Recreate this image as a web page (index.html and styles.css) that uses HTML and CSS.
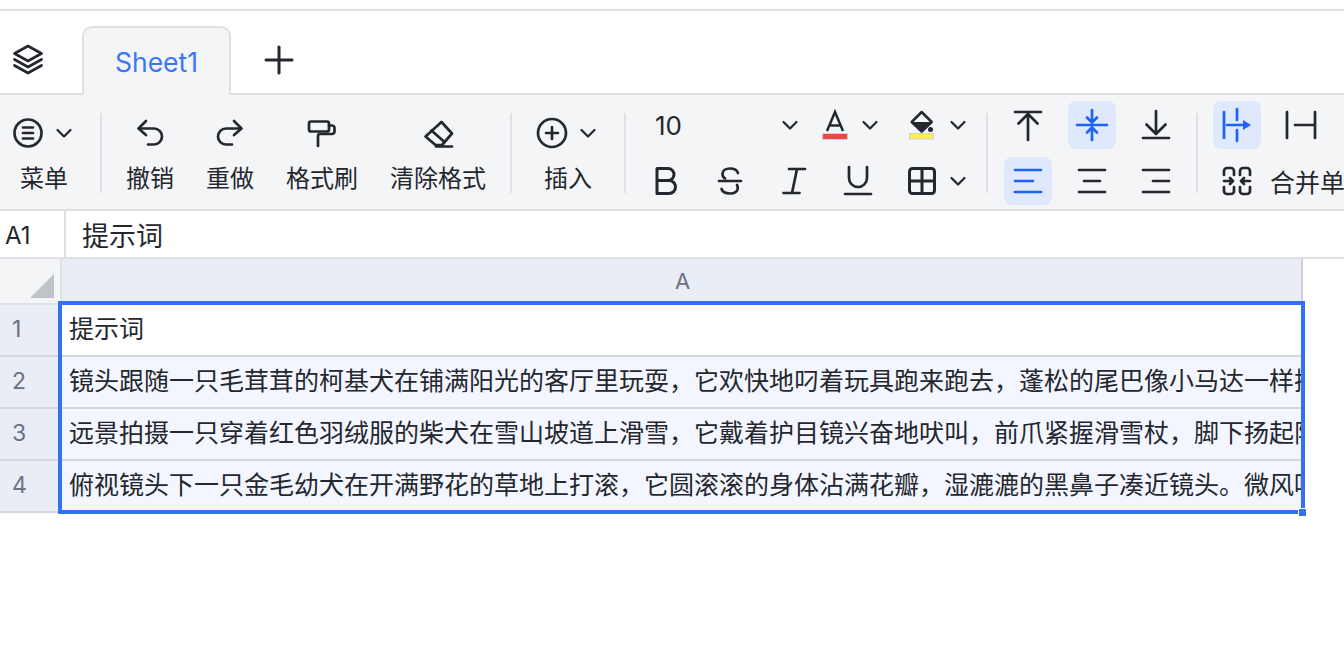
FILE: index.html

```html
<!DOCTYPE html>
<html lang="zh-CN">
<head>
  <meta charset="UTF-8" />
  <title>Sheet1</title>
  <link rel="stylesheet" href="styles.css">
</head>
<body>
  <svg class="defs" width="0" height="0">
    <symbol id="chev" viewBox="0 0 16 32"><path d="M1.5 13l6.500 6.500 6.500-6.500"/></symbol>
  </svg>

  <div class="tabbar">
    <div class="layers">
      <svg class="ic" width="32" height="32" viewBox="0 0 32 32"><path d="M16 2L29.500 9.500 16 17 2.500 9.500z"/><path d="M2.500 15.500l13.500 7.500 13.500-7.500"/><path d="M2.500 21.500l13.500 7.500 13.500-7.500"/></svg>
    </div>
    <div class="tab">Sheet1</div>
    <div class="add">
      <svg class="ic thick" width="32" height="32" viewBox="0 0 32 32"><path d="M16 3v26M3 16h26"/></svg>
    </div>
  </div>

  <div class="toolbar">
    <div class="tool first">
      <div class="tool-icon">
        <svg class="ic" width="32" height="32" viewBox="0 0 32 32"><circle cx="16" cy="16" r="13.500"/><path d="M11 10.500h10M11 16h10M11 21.500h10"/></svg>
        <svg class="ic thin chev" width="16" height="32"><use href="#chev"/></svg>
      </div>
      <span>菜单</span>
    </div>
    <div class="sep"></div>

    <div class="tools">
      <div class="tool">
        <div class="tool-icon">
          <svg class="ic" width="32" height="32" viewBox="0 0 32 32"><path d="M12 4L4.500 11.500 12 18"/><path d="M5 11.500h15a8 8 0 0 1 0 16h-6"/></svg>
        </div>
        <span>撤销</span>
      </div>
      <div class="tool">
        <div class="tool-icon">
          <svg class="ic" width="32" height="32" viewBox="0 0 32 32"><path d="M20 4l7.500 7.500L20 18"/><path d="M27 11.500H12a8 8 0 0 0 0 16h6"/></svg>
        </div>
        <span>重做</span>
      </div>
      <div class="tool">
        <div class="tool-icon">
          <svg class="ic" width="32" height="32" viewBox="0 0 32 32"><rect x="3" y="4.500" width="20" height="10" rx="2"/><path d="M23 8.500h3a2.500 2.500 0 0 1 2.500 2.500v3.500a2.500 2.500 0 0 1-2.500 2.500H14a2 2 0 0 0-2 2v10"/></svg>
        </div>
        <span>格式刷</span>
      </div>
      <div class="tool">
        <div class="tool-icon">
          <svg class="ic" width="32" height="32" viewBox="0 0 32 32"><path d="M19.500 5L30 16.500 20 28h-6.500L3.500 19.500z"/><path d="M9.500 13.500L22.500 25"/><path d="M14 29.500h16"/></svg>
        </div>
        <span>清除格式</span>
      </div>
    </div>
    <div class="sep"></div>

    <div class="tool insert">
      <div class="tool-icon">
        <svg class="ic" width="32" height="32" viewBox="0 0 32 32"><circle cx="16" cy="16" r="14"/><path d="M16 10v12M10 16h12"/></svg>
        <svg class="ic thin chev" width="16" height="32"><use href="#chev"/></svg>
      </div>
      <span>插入</span>
    </div>
    <div class="sep"></div>

    <div class="font-group">
      <div class="btn-row">
        <div class="font-size"><span>10</span><svg class="ic thin" width="16" height="32"><use href="#chev"/></svg></div>
        <div class="btn-split color-a">
          <svg width="32" height="32" viewBox="0 0 32 32"><path class="ic-line" d="M8 22L16 3l8 19M10.500 16.500h11"/><rect x="3.500" y="24.500" width="25" height="6" fill="#ef4444" stroke="#d2d3d6"/></svg>
          <svg class="ic thin" width="16" height="32"><use href="#chev"/></svg>
        </div>
        <div class="btn-split color-b">
          <svg width="32" height="32" viewBox="0 0 32 32"><path d="M16.700 3l10 10-10 9.500-10-9.500z" fill="none" stroke="#24272e" stroke-width="2.500" stroke-linejoin="round"/><path d="M6.700 13h20l-10 9.500z" fill="#24272e"/><circle cx="25.500" cy="20.500" r="2.500" fill="#24272e"/><rect x="4.500" y="24.500" width="24" height="5.500" fill="#fdeb4f" stroke="#d2d3d6"/></svg>
          <svg class="ic thin" width="16" height="32"><use href="#chev"/></svg>
        </div>
      </div>
      <div class="btn-row">
        <div class="btn">
          <svg class="ic thick" width="32" height="32" viewBox="0 0 32 32"><path d="M7 15.500h11a6 6 0 0 0 0-12H7v25h12a6.500 6.500 0 0 0 0-13"/></svg>
        </div>
        <div class="btn">
          <svg class="ic" width="32" height="32" viewBox="0 0 32 32"><path d="M5 16h22"/><path d="M24 8c-1-3-4-4.500-8-4.500S8.500 5.500 8.500 9c0 2 1 3.500 2.500 4.500"/><path d="M23 20c.5 1 .8 2 .8 3 0 3.500-3.300 5.500-7.800 5.500S8.500 27 7.500 24"/></svg>
        </div>
        <div class="btn">
          <svg class="ic" width="32" height="32" viewBox="0 0 32 32"><path d="M11 4h16M5.500 28h16M19 4l-5 24"/></svg>
        </div>
        <div class="btn">
          <svg class="ic" width="32" height="32" viewBox="0 0 32 32"><path d="M7 2v11a9 9 0 0 0 18 0V2"/><path d="M3 29h26"/></svg>
        </div>
        <div class="btn-split borders">
          <svg class="ic thick" width="32" height="32" viewBox="0 0 32 32"><rect x="3.500" y="3.500" width="25" height="25" rx="3"/><path d="M16 3.500v25M3.500 16h25"/></svg>
          <svg class="ic thin" width="16" height="32"><use href="#chev"/></svg>
        </div>
      </div>
    </div>
    <div class="sep"></div>

    <div class="align-group">
      <div class="btn-row">
        <div class="btn sq"><svg class="ic" width="32" height="32" viewBox="0 0 32 32"><path d="M3 3h26M16 31V5M6.500 14.500L16 5l9.500 9.500"/></svg></div>
        <div class="btn sq on"><svg class="ic" width="32" height="32" viewBox="0 0 32 32"><path d="M1 16h30M16 1v12M11 8.500l5 5 5-5M16 31V19M11 23.500l5-5 5 5"/></svg></div>
        <div class="btn sq"><svg class="ic" width="32" height="32" viewBox="0 0 32 32"><path d="M3 29h26M16 2v23M6.500 15.500L16 25l9.500-9.500"/></svg></div>
      </div>
      <div class="btn-row">
        <div class="btn sq on"><svg class="ic" width="32" height="32" viewBox="0 0 32 32"><path d="M3 5h26M3 16h18M3 27h26"/></svg></div>
        <div class="btn sq"><svg class="ic" width="32" height="32" viewBox="0 0 32 32"><path d="M3 5h26M8 16h16M3 27h26"/></svg></div>
        <div class="btn sq"><svg class="ic" width="32" height="32" viewBox="0 0 32 32"><path d="M3 5h26M13 16h16M3 27h26"/></svg></div>
      </div>
    </div>
    <div class="sep"></div>

    <div class="merge-group">
      <div class="btn-row">
        <div class="btn sq on"><svg class="ic" width="32" height="32" viewBox="0 0 32 32"><path d="M3 3v26M16 0v11M16 21v11M6 16h18"/><path class="solid" d="M22 11l8 5-8 5z"/></svg></div>
        <div class="btn sq"><svg class="ic" width="32" height="32" viewBox="0 0 32 32"><path d="M2 3v26M30 3v26M10 16h20"/></svg></div>
      </div>
      <div class="btn-row">
        <div class="merge">
          <svg class="ic" width="32" height="32" viewBox="0 0 32 32"><path d="M3 10V6a3 3 0 0 1 3-3h4a3 3 0 0 1 3 3v4M19 10V6a3 3 0 0 1 3-3h4a3 3 0 0 1 3 3v4"/><path d="M3 22v4a3 3 0 0 0 3 3h4a3 3 0 0 0 3-3v-4M19 22v4a3 3 0 0 0 3 3h4a3 3 0 0 0 3-3v-4"/><path d="M3 16h9M9 13l3 3-3 3M29 16h-9M23 13l-3 3 3 3"/></svg>
          <span>合并单元格</span>
        </div>
      </div>
    </div>
  </div>

  <div class="formula">
    <div class="cell-name">A1</div>
    <div class="formula-text">提示词</div>
  </div>

  <div class="sheet">
    <div class="col-head">
      <div class="corner"></div>
      <div class="col-a">A</div>
    </div>
    <div class="row">
      <div class="row-num">1</div>
      <div class="cell active">提示词</div>
    </div>
    <div class="row">
      <div class="row-num">2</div>
      <div class="cell">镜头跟随一只毛茸茸的柯基犬在铺满阳光的客厅里玩耍，它欢快地叼着玩具跑来跑去，蓬松的尾巴像小马达一样摇</div>
    </div>
    <div class="row">
      <div class="row-num">3</div>
      <div class="cell">远景拍摄一只穿着红色羽绒服的柴犬在雪山坡道上滑雪，它戴着护目镜兴奋地吠叫，前爪紧握滑雪杖，脚下扬起阵</div>
    </div>
    <div class="row">
      <div class="row-num">4</div>
      <div class="cell">俯视镜头下一只金毛幼犬在开满野花的草地上打滚，它圆滚滚的身体沾满花瓣，湿漉漉的黑鼻子凑近镜头。微风吹</div>
    </div>
    <div class="selection"><div class="handle"></div></div>
  </div>
</body>
</html>
```

FILE: styles.css

```css
body {
  margin: 0;
  height: 649px;
  overflow: hidden;
  background: #fff;
  color: #24272e;
  font-family: "Inter", "Noto Sans CJK SC", sans-serif;
  font-size: 24px;
}
.defs {
  position: absolute;
}
.ic {
  display: block;
  flex: none;
  fill: none;
  stroke: currentColor;
  stroke-width: 2.7;
  stroke-linecap: round;
  stroke-linejoin: round;
  overflow: visible;
}
.ic.thin {
  stroke-width: 2.2;
}
.ic.thick {
  stroke-width: 3;
}
.ic-line {
  fill: none;
  stroke: #24272e;
  stroke-width: 2.5;
}
.solid {
  fill: currentColor;
  stroke: none;
}

/* tabs */
.tabbar {
  display: flex;
  align-items: flex-end;
  height: 82px;
  margin-top: 9px;
  border-top: 2px solid #dfe0e3;
  border-bottom: 2px solid #dfe0e3;
}
.layers {
  width: 82px;
  height: 67px;
  padding-left: 12px;
  box-sizing: border-box;
  display: flex;
  align-items: center;
}
.tab {
  width: 149px;
  height: 69px;
  margin-bottom: -2px;
  box-sizing: border-box;
  border: 2px solid #dfe0e3;
  border-bottom: none;
  border-radius: 10px 10px 0 0;
  background: #f4f5f7;
  color: #3b76f6;
  font-size: 26.5px;
  display: flex;
  align-items: center;
  justify-content: center;
}
.add {
  height: 67px;
  margin-left: 32px;
  display: flex;
  align-items: center;
}

/* toolbar */
.toolbar {
  display: flex;
  align-items: flex-start;
  height: 116px;
  padding-top: 6px;
  box-sizing: border-box;
  background: #f4f5f7;
  border-bottom: 2px solid #dfe0e3;
  white-space: nowrap;
  overflow: hidden;
}
.toolbar > * {
  flex: none;
}
.sep {
  width: 2px;
  height: 80px;
  margin-top: 12px;
  background: #dfe0e3;
}
.tools {
  display: flex;
  gap: 32px;
  padding: 0 24px;
}
.tool {
  display: flex;
  flex-direction: column;
  align-items: center;
}
.tool-icon {
  height: 48px;
  margin-top: 8px;
  display: flex;
  align-items: center;
  justify-content: center;
  gap: 12px;
}
.tool span {
  line-height: 43px;
}
.tool.first {
  width: 88px;
  margin-right: 12px;
}
.tool.first .tool-icon {
  margin-left: -4px;
}
.tool.insert {
  width: 112px;
}
.tool.insert .tool-icon {
  margin-left: -4px;
}
.btn-row {
  display: flex;
  align-items: center;
  height: 48px;
}
.btn-row + .btn-row {
  margin-top: 8px;
}
.btn {
  width: 64px;
  height: 48px;
  display: flex;
  align-items: center;
  justify-content: center;
  flex: none;
}
.btn.sq {
  width: 48px;
  border-radius: 8px;
}
.btn.sq + .btn.sq {
  margin-left: 16px;
}
.btn.on {
  background: #dfe8fd;
  color: #1f63f5;
}
.btn-split {
  display: flex;
  align-items: center;
  flex: none;
}
.font-group {
  width: 360px;
  padding-left: 8px;
  box-sizing: border-box;
}
.font-size {
  width: 164px;
  padding-left: 21px;
  box-sizing: border-box;
  display: flex;
  align-items: center;
  justify-content: space-between;
  flex: none;
  font-size: 26px;
}
.color-a {
  margin-left: 21px;
  gap: 11px;
}
.color-b {
  margin-left: 27px;
  gap: 13px;
}
.borders {
  margin-left: 16px;
  gap: 12px;
}
.align-group {
  padding: 0 16px;
}
.merge-group {
  padding-left: 15px;
}
.merge {
  display: flex;
  align-items: center;
  gap: 17px;
  padding-left: 8px;
  font-size: 25px;
}

/* formula bar */
.formula {
  display: flex;
  align-items: center;
  height: 48px;
  box-sizing: border-box;
  border-bottom: 2px solid #dfe0e3;
}
.cell-name {
  width: 66px;
  height: 46px;
  line-height: 50px;
  padding-left: 5px;
  box-sizing: border-box;
  border-right: 2px solid #dfe0e3;
  flex: none;
}
.formula-text {
  padding-left: 16px;
  font-size: 27px;
}

/* sheet */
.sheet {
  position: relative;
  width: 1303px;
}
.col-head {
  display: flex;
  height: 46px;
  border-bottom: 2px solid #dfe0e3;
  box-sizing: border-box;
}
.corner {
  position: relative;
  width: 62px;
  flex: none;
  box-sizing: border-box;
  background: #f4f5f7;
  border-right: 2px solid #dfe0e3;
}
.corner::after {
  content: "";
  position: absolute;
  right: 6px;
  bottom: 5px;
  width: 24px;
  height: 24px;
  background: #c0c3c9;
  clip-path: polygon(100% 0, 100% 100%, 0 100%);
}
.col-a {
  flex: 1;
  padding-left: 2px;
  background: #e9edf6;
  color: #6b7280;
  font-size: 22px;
  text-align: center;
  line-height: 44px;
  border-right: 2px solid #cfd1d6;
}
.row {
  display: flex;
  height: 52px;
  box-sizing: border-box;
  border-bottom: 2px solid #d3d6de;
}
.row-num {
  width: 62px;
  flex: none;
  background: #e9edf6;
  color: #6b7280;
  font-size: 23px;
  line-height: 49px;
  text-align: left;
  padding-left: 12px;
  box-sizing: border-box;
}
.cell {
  flex: 1;
  min-width: 0;
  padding-left: 7px;
  background: #f3f6fe;
  font-size: 25px;
  line-height: 49px;
  overflow: hidden;
  white-space: nowrap;
}
.cell.active {
  background: #fff;
}
.selection {
  position: absolute;
  left: 58px;
  top: 42px;
  width: 1247px;
  height: 213px;
  box-sizing: border-box;
  border: 4px solid #3370f6;
}
.handle {
  position: absolute;
  right: -6px;
  bottom: -7px;
  width: 9px;
  height: 9px;
  box-sizing: border-box;
  background: #3370f6;
  border: 1px solid #fff;
}
```
